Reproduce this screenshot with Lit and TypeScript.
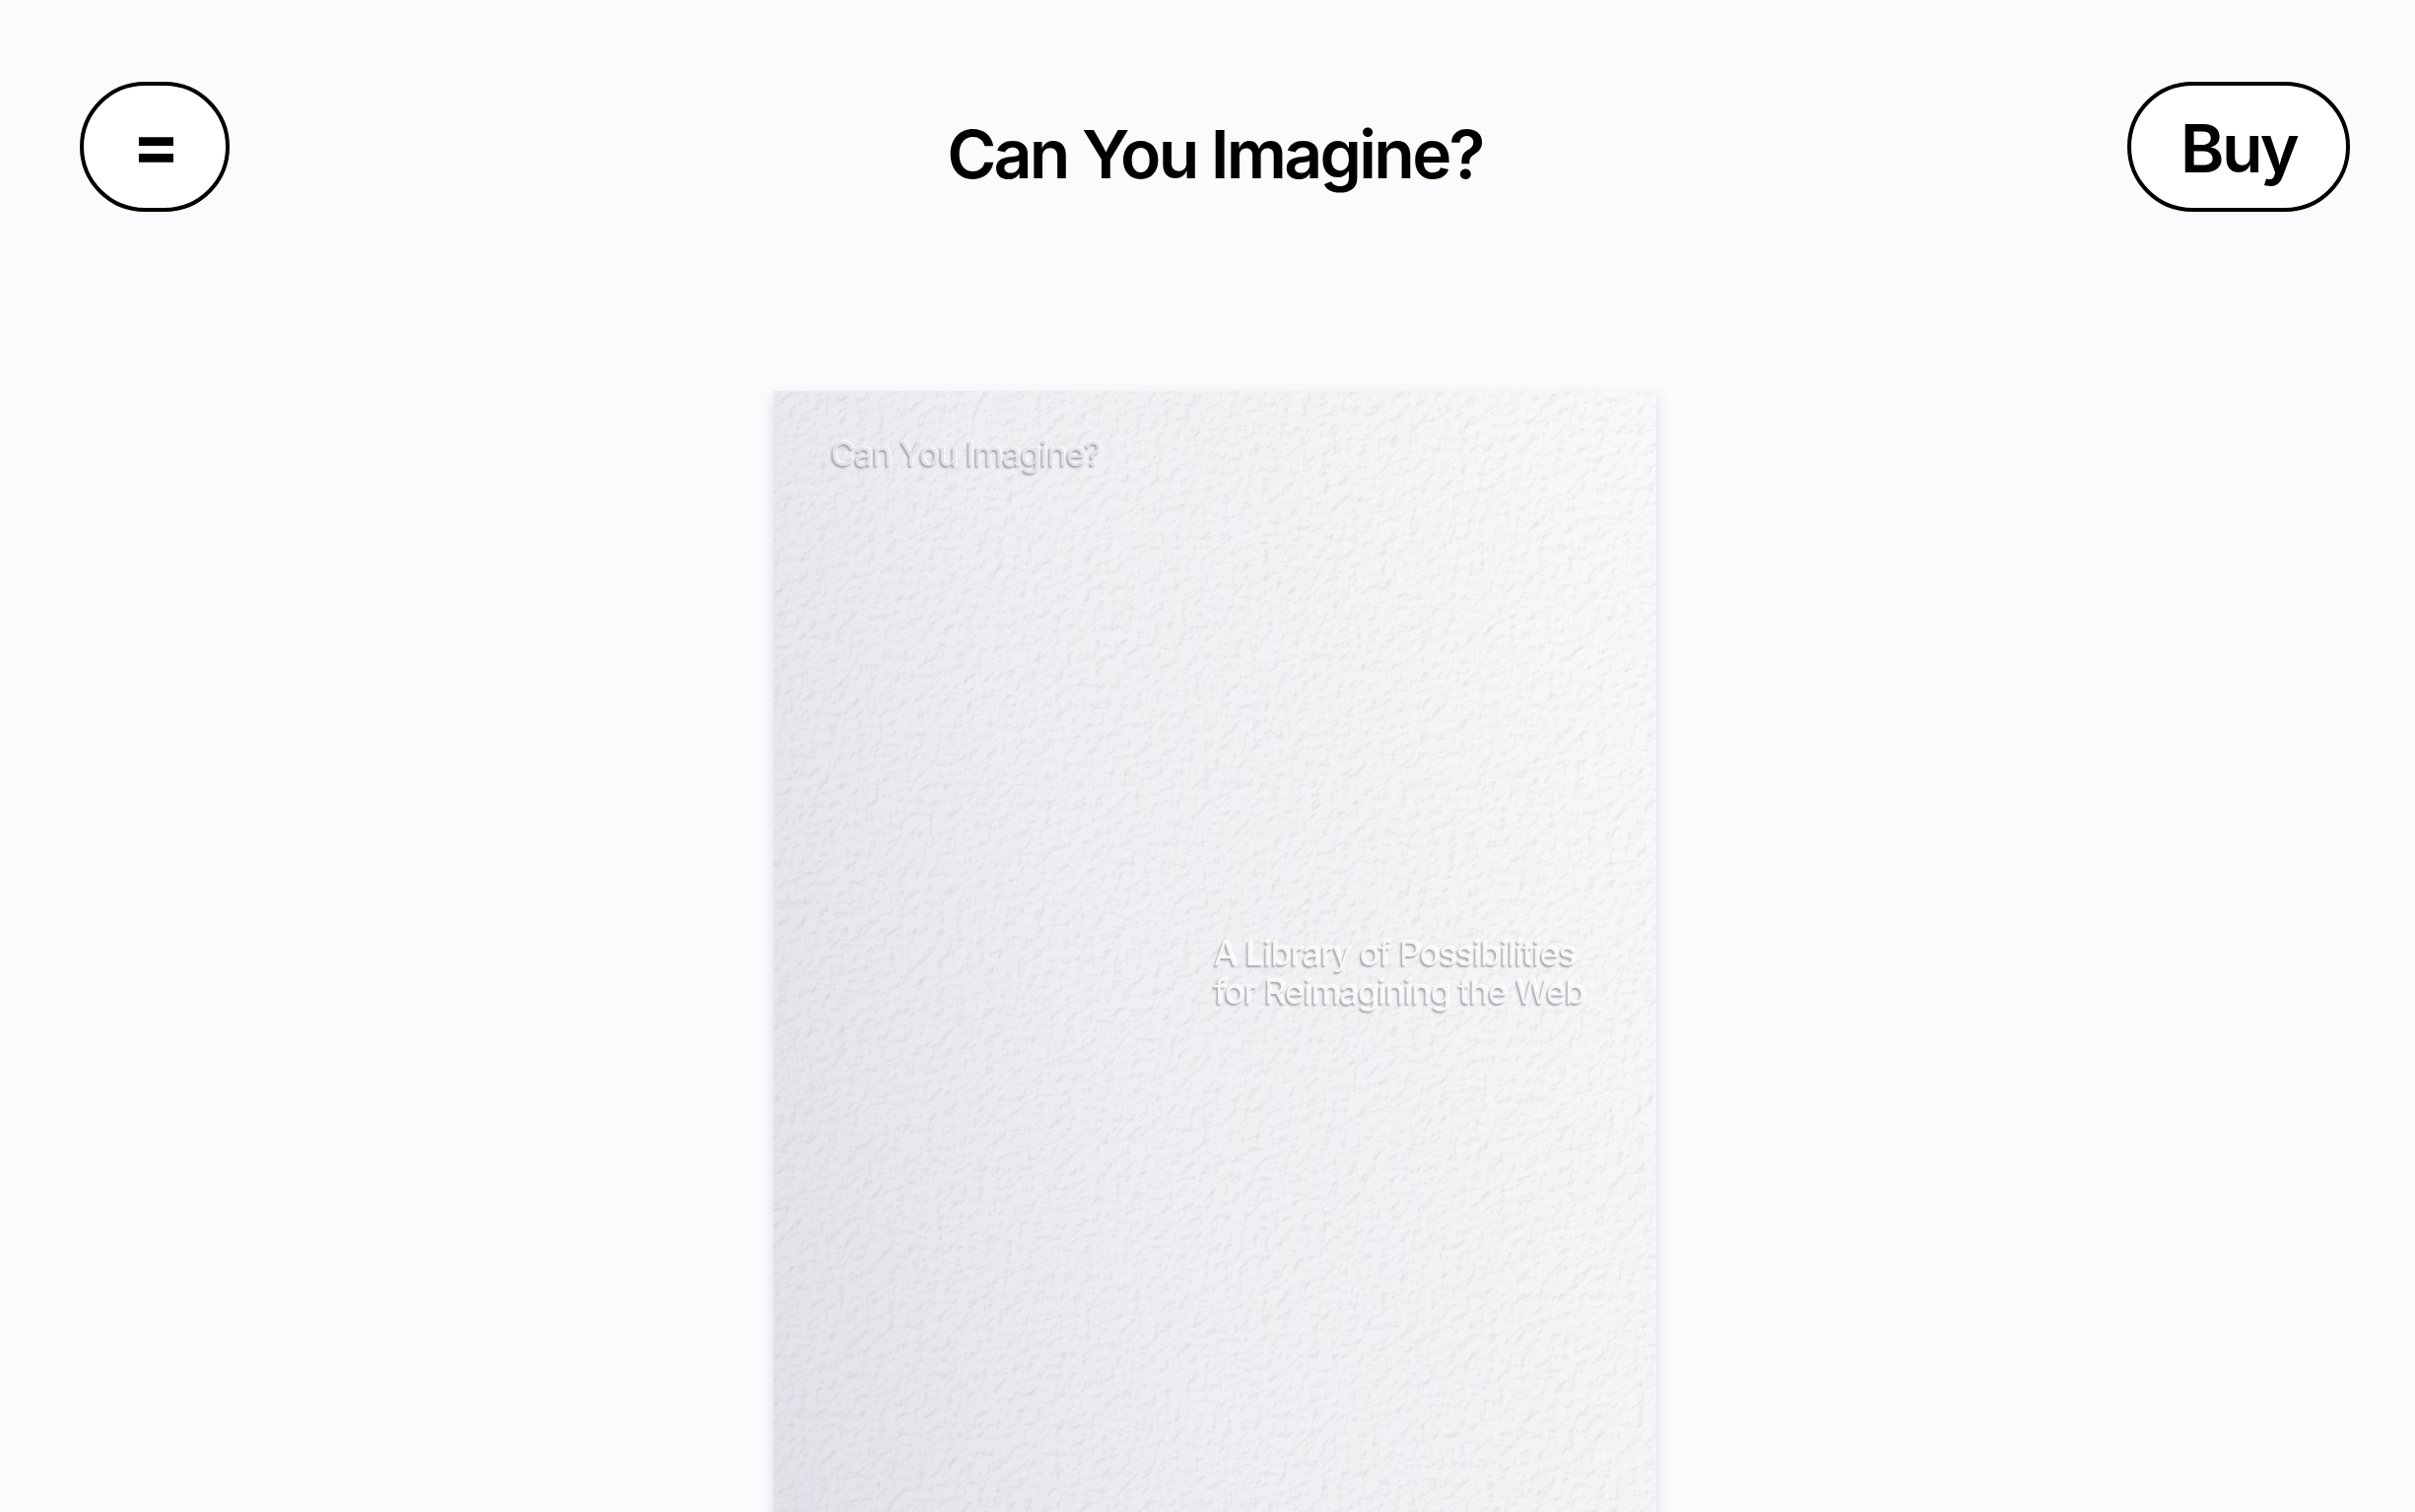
import { LitElement, html, css } from "lit";
import { customElement } from "lit/decorators.js";

@customElement("app-root")
export class AppRoot extends LitElement {
  static styles = css`
    :host {
      display: block;
      height: 1535px;
      overflow: hidden;
      background: #fafbfd;
      color: #000;
      font-family: Inter, "Liberation Sans", sans-serif;
      font-weight: 600;
    }
    .top {
      display: grid;
      grid-template-columns: 1fr auto 1fr;
      align-items: start;
      padding: 83px 66px 0 81px;
      height: 397px;
      box-sizing: border-box;
    }
    .pill {
      box-sizing: border-box;
      height: 132px;
      border: 4px solid #000;
      border-radius: 66px;
      background: #fff;
      color: #000;
      display: flex;
      align-items: center;
      justify-content: center;
      font-family: inherit;
      font-weight: 600;
      font-size: 68px;
      line-height: 1;
      letter-spacing: -0.04em;
      padding: 2px 0 0;
    }
    .menu { width: 152px; justify-self: start; font-weight: 700; font-size: 72px; padding: 0 0 4px; }
    .buy { width: 226px; justify-self: end; }
    .title {
      margin: 0;
      padding-top: 31px;
      font-size: 68px;
      font-weight: 600;
      line-height: 84px;
      letter-spacing: -0.041em;
      white-space: nowrap;
    }
    .stage { display: flex; justify-content: center; padding-left: 15px; }
    .paper {
      position: relative;
      width: 896px;
      height: 1300px;
      box-sizing: border-box;
      padding: 44px 0 0 58px;
      background: linear-gradient(76deg, #e0e1e8 0%, #eeeff2 42%, #f9f9fb 100%);
      box-shadow: 0 6px 14px rgba(60, 60, 80, 0.15);
    }
    .grain {
      position: absolute;
      inset: 0;
      width: 100%;
      height: 100%;
      mix-blend-mode: multiply;
    }
    .emboss {
      position: relative;
      margin: 0;
      font-size: 34px;
      font-weight: 400;
      line-height: 39px;
      letter-spacing: -0.026em;
      color: #e4e4e8;
      text-shadow: -1.5px 1.5px 2px #a4a4ac, 1.5px -1px 1px #fafafa;
      filter: blur(0.7px);
      white-space: nowrap;
    }
    .lower {
      margin: 468px 0 0 389px;
      letter-spacing: -0.022em;
      color: #f6f6f8;
      text-shadow: -1.5px 1.5px 2px #a4a4ac, 1.5px -1px 1px #ffffff;
    }
  `;

  render() {
    return html`
      <div class="top">
        <button class="pill menu">=</button>
        <h1 class="title">Can You Imagine?</h1>
        <button class="pill buy">Buy</button>
      </div>
      <div class="stage">
        <div class="paper">
          <svg class="grain" aria-hidden="true">
            <filter id="paper" x="0" y="0" width="100%" height="100%" color-interpolation-filters="sRGB">
              <feTurbulence type="fractalNoise" baseFrequency="0.1" numOctaves="5" seed="4" result="coarse"></feTurbulence>
              <feDiffuseLighting in="coarse" surfaceScale="1.2" diffuseConstant="1.13" lighting-color="#ffffff" result="a">
                <feDistantLight azimuth="50" elevation="62"></feDistantLight>
              </feDiffuseLighting>
              <feGaussianBlur in="a" stdDeviation="0.7"></feGaussianBlur>
              <feComponentTransfer>
                <feFuncR type="linear" slope="0.3" intercept="0.7"></feFuncR>
                <feFuncG type="linear" slope="0.3" intercept="0.7"></feFuncG>
                <feFuncB type="linear" slope="0.3" intercept="0.7"></feFuncB>
              </feComponentTransfer>
            </filter>
            <rect width="100%" height="100%" filter="url(#paper)"></rect>
          </svg>
          <p class="emboss">Can You Imagine?</p>
          <p class="emboss lower">A Library of Possibilities<br />for Reimagining the Web</p>
        </div>
      </div>
    `;
  }
}
